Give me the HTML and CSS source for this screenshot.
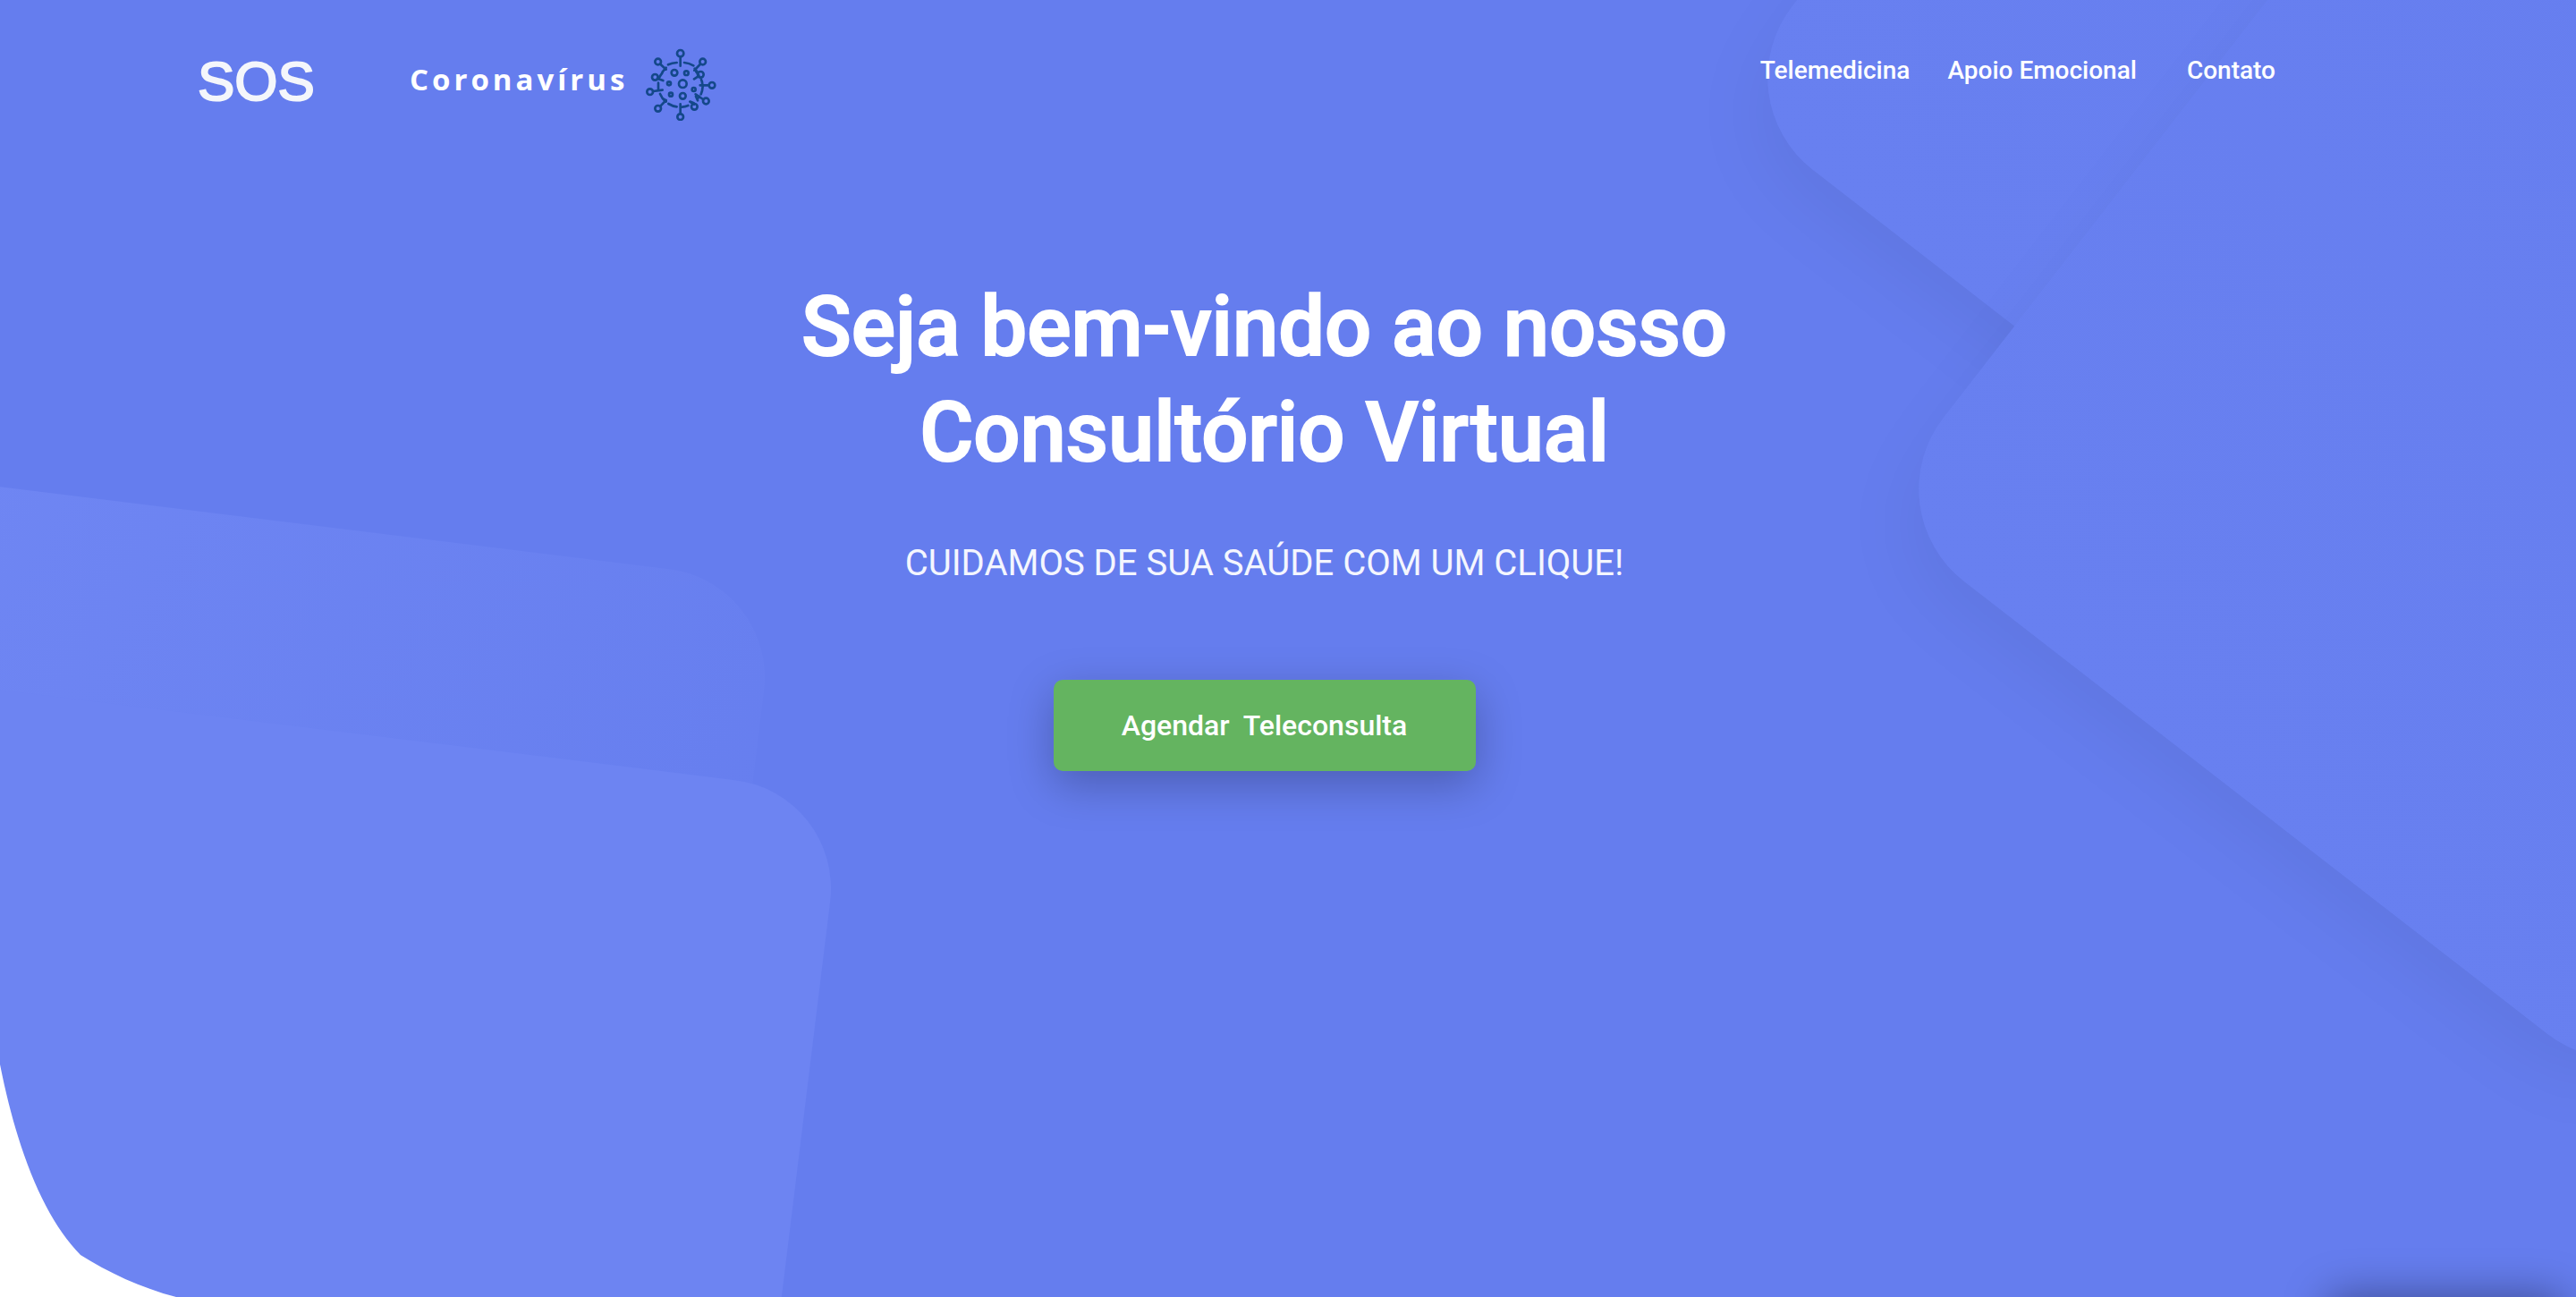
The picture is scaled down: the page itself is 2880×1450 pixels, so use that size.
FILE: index.html
```html
<!DOCTYPE html>
<html lang="pt-BR">
<head>
<meta charset="utf-8">
<meta name="viewport" content="width=device-width, initial-scale=1">
<title>SOS Coronavírus</title>
<link rel="stylesheet" href="styles.css">
</head>
<body>
<div class="hero">
  <div class="shapes" aria-hidden="true">
    <div class="shape shape-right shape-right-back"></div>
    <div class="shape shape-right shape-right-front"></div>
    <div class="shape shape-left shape-left-back"></div>
    <div class="shape shape-left shape-left-front"></div>
    <svg class="corner" viewBox="0 0 200 260"><path fill="#fff" d="M0 0C20 100 50 172 90 213C120 232 158 250 197 260H0Z"/></svg>
    <div class="widget-shadow"></div>
  </div>

  <header class="header">
    <a class="brand" href="#">
      <span class="brand-sos">SOS</span>
      <span class="brand-name">Coronavírus</span>
      <svg class="brand-icon" viewBox="38 26 240 243" fill="none" stroke="#14488a" stroke-width="8" stroke-linecap="round">
        <path d="M113 81Q126 75 142 74M167 74Q184 76 198 84M80 142V165M86 179Q93 196 105 205M114 212Q127 220 142 222M159 223Q170 222 180 218M186 205L200 214M212 201L206 187M223 180Q228 170 229 154M228 147Q227 136 224 131M216 117Q212 110 207 105M93 109Q86 118 81 128"/>
        <path d="M154 55V85M87 79L106 97M94 105L106 91M220 80L201 100M202 94L210 104M77 127L96 134M214 120L200 129M220 150H248M63 170L94 166M87 220L106 200M100 197L106 204M154 244V213M205 180L230 197M217 187L212 195M199 210L190 206"/>
        <circle cx="154" cy="43" r="11"/><circle cx="79" cy="71" r="10"/><circle cx="229" cy="71" r="10"/>
        <circle cx="69" cy="123" r="10"/><circle cx="222" cy="114" r="10"/><circle cx="260" cy="150" r="10"/>
        <circle cx="52" cy="172" r="10"/><circle cx="79" cy="228" r="10"/><circle cx="154" cy="256" r="10"/>
        <circle cx="240" cy="203" r="10"/><circle cx="201" cy="222" r="10"/>
        <circle cx="134" cy="108" r="10"/><circle cx="174" cy="109" r="7"/><circle cx="162" cy="145" r="13"/>
        <circle cx="116" cy="144" r="6"/><circle cx="199" cy="164" r="6"/><circle cx="122" cy="181" r="6"/><circle cx="162" cy="186" r="10"/>
      </svg>
    </a>
    <nav class="nav">
      <a href="#telemedicina">Telemedicina</a>
      <a href="#apoio">Apoio Emocional</a>
      <a class="nav-contact" href="#contato">Contato</a>
    </nav>
  </header>

  <main class="intro">
    <h1 class="title">Seja bem-vindo ao nosso<br>Consultório Virtual</h1>
    <p class="subtitle">CUIDAMOS DE SUA SAÚDE COM UM CLIQUE!</p>
    <button class="cta" type="button">Agendar&nbsp; Teleconsulta</button>
  </main>
</div>
</body>
</html>
```
FILE: styles.css
```css
* {
  box-sizing: border-box;
}

body {
  margin: 0;
  font-family: Roboto, "Liberation Sans", sans-serif;
  color: #fff;
}

.hero {
  position: relative;
  min-height: 100vh;
  overflow: hidden;
  background: #657dee;
}

/* Decorative background */
.shapes {
  position: absolute;
  inset: 0;
  overflow: hidden;
}

.shape {
  position: absolute;
}

.shape-right {
  width: 1086px;
  height: 1086px;
  border-radius: 130px;
  background: linear-gradient(7deg, #6880f0, #667eef);
  box-shadow: 0 50px 80px -15px rgba(0, 0, 0, 0.05);
  transform: rotate(37.8deg);
  transform-origin: 0 100%;
}

.shape-right-back {
  top: -976px;
  right: -130px;
}

.shape-right-front {
  top: -516px;
  right: -299px;
}

.shape-left {
  width: 1100px;
  height: 1100px;
  border-radius: 122px;
  transform: rotate(7deg);
  transform-origin: 100% 0;
}

.shape-left-back {
  top: 651px;
  left: -231px;
  background: linear-gradient(112deg, #6f86f3 10%, #657dee 92%);
}

.shape-left-front {
  top: 887px;
  left: -157px;
  background: #6d84f2;
}

.corner {
  position: absolute;
  left: 0;
  bottom: 0;
  width: 200px;
  height: 260px;
}

.widget-shadow {
  position: absolute;
  top: 100%;
  right: 16px;
  width: 260px;
  height: 120px;
  box-shadow: 0 0 50px rgba(0, 0, 0, 0.4);
}

/* Header */
.header {
  position: relative;
  display: flex;
  justify-content: space-between;
  align-items: flex-start;
  padding: 54px 336px 0 221px;
}

.brand {
  display: flex;
  align-items: flex-start;
  color: #fff;
  text-decoration: none;
}

.brand-sos {
  margin-right: 106px;
  font: 62px/74px "Liberation Sans", Arial, sans-serif;
  color: #f4f6fb;
  -webkit-text-stroke: 2px #f4f6fb;
}

.brand-name {
  font: 700 33px/70px "Open Sans", sans-serif;
  letter-spacing: 4px;
}

.brand-icon {
  width: 80px;
  height: 81px;
  margin-left: 20px;
}

.nav {
  display: flex;
  gap: 42px;
  padding-top: 9px;
}

.nav a {
  font-size: 28px;
  font-weight: 500;
  line-height: 32px;
  color: #fff;
  text-decoration: none;
}

.nav .nav-contact {
  margin-left: 14px;
}

/* Intro */
.intro {
  position: relative;
  display: flex;
  flex-direction: column;
  align-items: center;
  padding: 172px 53px 0 0;
  text-align: center;
}

.title {
  margin: 0;
  font-size: 92px;
  font-weight: 500;
  line-height: 118px;
  -webkit-text-stroke: 2px #fff;
}

.subtitle {
  margin: 55px 0 0;
  font-size: 40px;
  line-height: 64px;
  color: #f4f6fe;
}

.cta {
  width: 472px;
  height: 102px;
  margin-top: 98px;
  border: 0;
  border-radius: 10px;
  background: #64b460;
  box-shadow: 0 15px 50px rgba(0, 0, 0, 0.25);
  font: 500 32px/40px Roboto, sans-serif;
  color: #fff;
}
```
